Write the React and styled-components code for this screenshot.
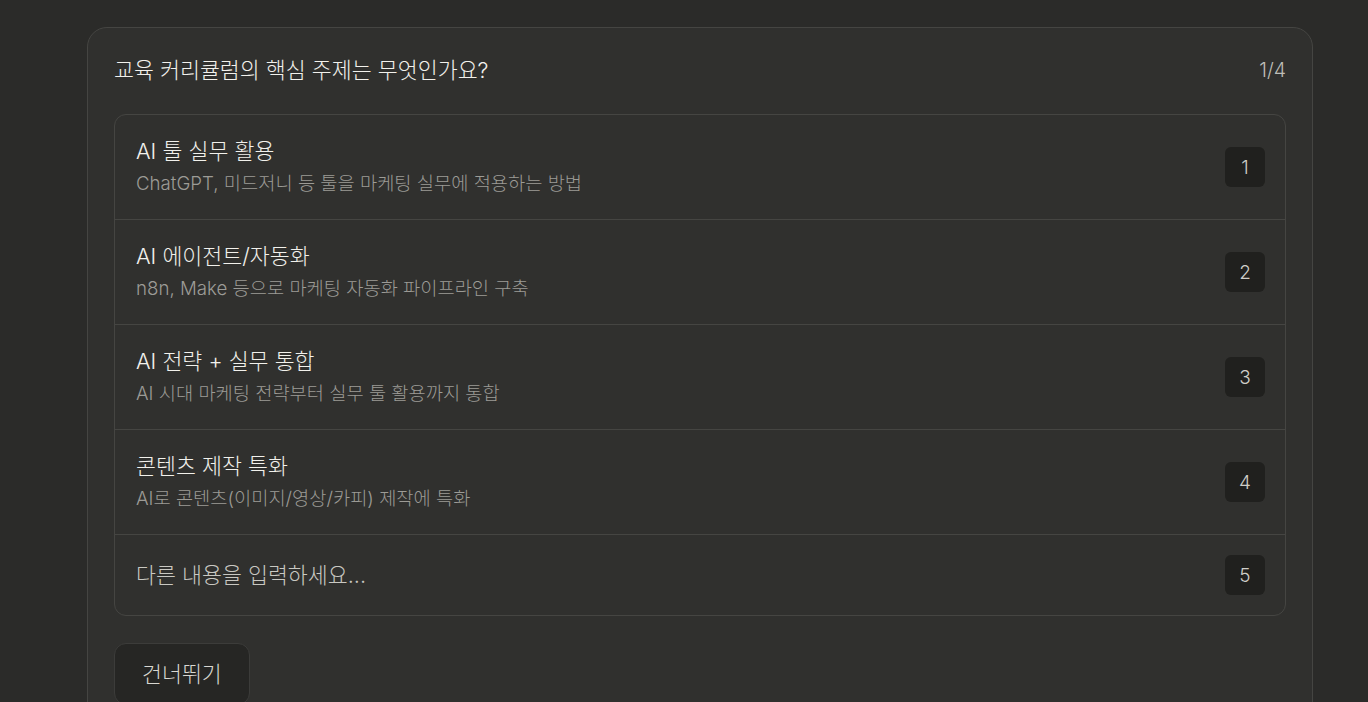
import styled, { createGlobalStyle } from "styled-components";

const GlobalStyle = createGlobalStyle`
    * { box-sizing: border-box; }
    body {
        margin: 0;
        background: #2b2b29;
        font-family: "Inter", "Noto Sans CJK KR", sans-serif;
        font-weight: 300;
        color: #ecebe6;
    }
`;

const Page = styled.div`
    padding: 27px 55px 0 87px;
    height: 702px;
    overflow: hidden;
`;

const Card = styled.div`
    width: 1226px;
    background: #30302e;
    border: 1px solid #454542;
    border-radius: 20px;
    padding: 28px 26px 40px;
`;

const Header = styled.div`
    display: flex;
    justify-content: space-between;
    align-items: center;
    margin-bottom: 30px;
`;

const Question = styled.h2`
    margin: 0;
    font-size: 21.7px;
    line-height: 28px;
    font-weight: 300;
    color: #f2f1ec;
`;

const Counter = styled.span`
    font-size: 19.5px;
    color: #bebdb7;
`;

const List = styled.div`
    border: 1px solid #454542;
    border-radius: 12px;
    overflow: hidden;
`;

const Row = styled.div`
    display: flex;
    align-items: center;
    justify-content: space-between;
    padding: ${(p) => (p.$single ? "20px 20px 20px 21px" : "22px 20px 22px 21px")};
    border-top: ${(p) => (p.$first ? "none" : "1px solid #454542")};
`;

const Texts = styled.div`
    display: flex;
    flex-direction: column;
`;

const OptionTitle = styled.div`
    font-size: 21.7px;
    line-height: 28px;
    color: ${(p) => (p.$muted ? "#c9c8c2" : "#f2f1ec")};
`;

const OptionDesc = styled.div`
    margin-top: 6px;
    font-size: 18.7px;
    line-height: 26px;
    color: #9c9b96;
`;

const Badge = styled.div`
    width: 40px;
    height: 40px;
    border-radius: 6px;
    background: #20201e;
    display: flex;
    align-items: center;
    justify-content: center;
    font-size: 19px;
    color: #cfcec8;
`;

const SkipButton = styled.button`
    margin-top: 27px;
    padding: 16px 27px;
    background: #262624;
    border: 1px solid #3c3c3a;
    border-radius: 12px;
    font-family: inherit;
    font-weight: 300;
    font-size: 21.7px;
    line-height: 28px;
    color: #d8d7d1;
`;

const options = [
    { title: "AI 툴 실무 활용", desc: "ChatGPT, 미드저니 등 툴을 마케팅 실무에 적용하는 방법" },
    { title: "AI 에이전트/자동화", desc: "n8n, Make 등으로 마케팅 자동화 파이프라인 구축" },
    { title: "AI 전략 + 실무 통합", desc: "AI 시대 마케팅 전략부터 실무 툴 활용까지 통합" },
    { title: "콘텐츠 제작 특화", desc: "AI로 콘텐츠(이미지/영상/카피) 제작에 특화" },
];

const App = () => {
    return (
        <Page>
            <GlobalStyle />
            <Card>
                <Header>
                    <Question>교육 커리큘럼의 핵심 주제는 무엇인가요?</Question>
                    <Counter>1/4</Counter>
                </Header>
                <List>
                    {options.map((item, index) => (
                        <Row key={index} $first={index === 0}>
                            <Texts>
                                <OptionTitle>{item.title}</OptionTitle>
                                <OptionDesc>{item.desc}</OptionDesc>
                            </Texts>
                            <Badge>{index + 1}</Badge>
                        </Row>
                    ))}
                    <Row $single>
                        <OptionTitle $muted>다른 내용을 입력하세요...</OptionTitle>
                        <Badge>5</Badge>
                    </Row>
                </List>
                <SkipButton>건너뛰기</SkipButton>
            </Card>
        </Page>
    );
};

export default App;
